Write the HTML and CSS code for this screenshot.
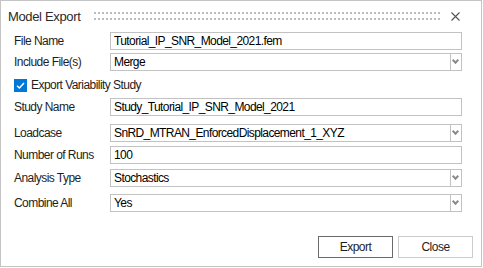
FILE: index.html
```html
<!DOCTYPE html>
<html>

<head>
  <link rel="stylesheet" href="styles.css">
</head>

<body>
  <div class="dialog">
    <div class="titlebar">
      <span class="title">Model Export</span>
      <div class="grip"></div>
      <svg class="close" width="9" height="9" viewBox="0 0 9 9">
        <path d="M0.5 0.5 L8.5 8.5 M8.5 0.5 L0.5 8.5" stroke="#555" stroke-width="1.1" fill="none"/>
      </svg>
    </div>

    <div class="form">
      <div class="row">
        <label>File Name</label>
        <div class="field">Tutorial_IP_SNR_Model_2021.fem</div>
      </div>
      <div class="row gap-3">
        <label>Include File(s)</label>
        <div class="field combo"><span class="value">Merge</span><span class="arrow"></span></div>
      </div>
      <div class="check-row">
        <span class="checkbox">
          <svg width="13" height="13" viewBox="0 0 13 13">
            <path d="M3 6.8 L5.4 9 L10 4" stroke="#fff" stroke-width="1.5" fill="none"/>
          </svg>
        </span>
        <span>Export Variability Study</span>
      </div>
      <div class="row gap-6">
        <label>Study Name</label>
        <div class="field">Study_Tutorial_IP_SNR_Model_2021</div>
      </div>
      <div class="row gap-8">
        <label>Loadcase</label>
        <div class="field combo"><span class="value">SnRD_MTRAN_EnforcedDisplacement_1_XYZ</span><span class="arrow"></span></div>
      </div>
      <div class="row gap-4">
        <label>Number of Runs</label>
        <div class="field">100</div>
      </div>
      <div class="row gap-5">
        <label>Analysis Type</label>
        <div class="field combo"><span class="value">Stochastics</span><span class="arrow"></span></div>
      </div>
      <div class="row gap-7">
        <label>Combine All</label>
        <div class="field combo"><span class="value">Yes</span><span class="arrow"></span></div>
      </div>
    </div>

    <div class="buttons">
      <button class="btn primary">Export</button>
      <button class="btn">Close</button>
    </div>
  </div>
</body>

</html>
```

FILE: styles.css
```css
body {
  margin: 0;
  background-color: #ffffff;
  font-family: "Liberation Sans", Arial, sans-serif;
  font-size: 12px;
  color: #1e1e1e;
}

.dialog {
  box-sizing: border-box;
  width: 482px;
  height: 267px;
  border: 1px solid #c4c4c4;
  display: flex;
  flex-direction: column;
}

.titlebar {
  display: flex;
  align-items: center;
  height: 30px;
  padding: 0 21px 0 7px;
}

.title {
  font-size: 13px;
  color: #2b2b2b;
  letter-spacing: -0.35px;
}

.grip {
  flex: 1;
  height: 8px;
  margin: 0 10px 0 14px;
  background:
    linear-gradient(90deg, #bcbcbc 2px, transparent 2px) 0 0 / 4px 2px repeat-x,
    linear-gradient(90deg, #bcbcbc 2px, transparent 2px) 0 6px / 4px 2px repeat-x;
}

.close {
  display: block;
}

.form {
  display: flex;
  flex-direction: column;
  padding: 1px 19px 0 13px;
}

.row {
  display: flex;
  align-items: center;
  height: 18px;
}

.row label {
  width: 96px;
  flex: none;
  letter-spacing: -0.55px;
}

.gap-3 { margin-top: 3px; }
.gap-4 { margin-top: 4px; }
.gap-5 { margin-top: 5px; }
.gap-6 { margin-top: 6px; }
.gap-7 { margin-top: 7px; }
.gap-8 { margin-top: 8px; }

.field {
  box-sizing: border-box;
  flex: 1;
  height: 18px;
  border: 1px solid #c2c2c2;
  padding-left: 3px;
  line-height: 16px;
  color: #000;
  letter-spacing: -0.6px;
  white-space: nowrap;
  overflow: hidden;
}

.combo {
  display: flex;
  padding-right: 0;
}

.combo .value {
  flex: 1;
}

.combo .arrow {
  width: 10px;
  border-left: 1px solid #c2c2c2;
  position: relative;
}

.combo .arrow::after {
  content: "";
  position: absolute;
  left: 2px;
  top: 4px;
  width: 3px;
  height: 3px;
  border-right: 2px solid #8a8a8a;
  border-bottom: 2px solid #8a8a8a;
  transform: rotate(45deg);
}

.check-row {
  display: flex;
  align-items: center;
  gap: 4px;
  height: 14px;
  margin-top: 7px;
  letter-spacing: -0.55px;
}

.checkbox {
  width: 13px;
  height: 13px;
  background-color: #0078d7;
  display: flex;
}

.buttons {
  display: flex;
  justify-content: flex-end;
  gap: 5px;
  margin-top: auto;
  padding: 0 8px 8px 0;
}

.btn {
  width: 75px;
  height: 22px;
  background-color: #fff;
  border: 1px solid #cccccc;
  font-family: "Liberation Sans", Arial, sans-serif;
  font-size: 12px;
  letter-spacing: -0.5px;
  color: #1e1e1e;
  padding: 0;
}

.btn.primary {
  border-color: #6a6a6a;
}
```
